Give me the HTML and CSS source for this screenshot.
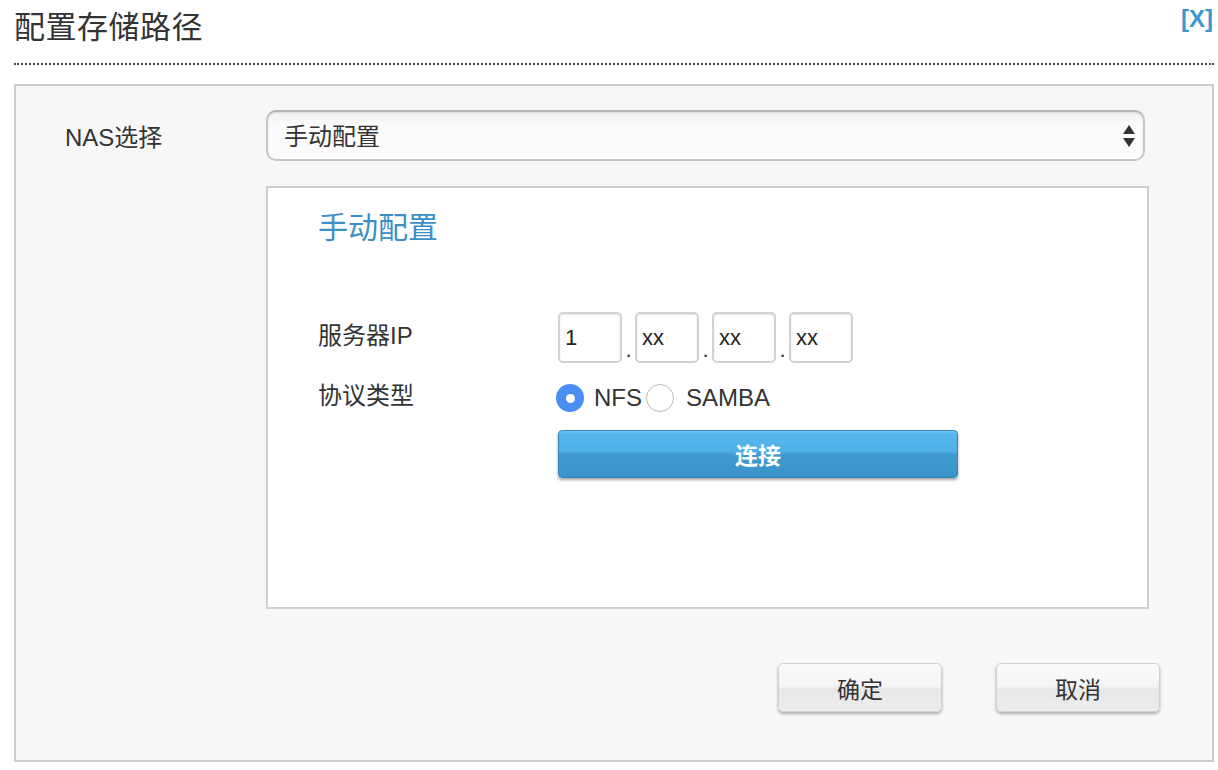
FILE: index.html
```html
<!DOCTYPE html>
<html lang="zh-CN">
<head>
<meta charset="utf-8">
<title>配置存储路径</title>
<link rel="stylesheet" href="styles.css">
</head>
<body>
<div class="dialog">
  <div class="header">
    <h1 class="title">配置存储路径</h1>
    <a class="close" href="#">[X]</a>
  </div>
  <div class="panel">
    <div class="nas-label">NAS选择</div>
    <div class="select">
      <span class="select-text">手动配置</span>
      <svg class="select-arrows" width="12" height="22" viewBox="0 0 12 22"><path d="M6 0 L12 9 L0 9 Z" fill="#333"/><path d="M0 13 L12 13 L6 22 Z" fill="#333"/></svg>
    </div>
    <div class="spacer"></div>
    <div class="manual">
      <div class="manual-title">手动配置</div>
      <div class="form">
        <div class="form-label">服务器IP</div>
        <div class="ip">
          <input class="ip-input" type="text" value="1">
          <span class="ip-sep">.</span>
          <input class="ip-input" type="text" value="xx">
          <span class="ip-sep">.</span>
          <input class="ip-input" type="text" value="xx">
          <span class="ip-sep">.</span>
          <input class="ip-input" type="text" value="xx">
        </div>
        <div class="form-label proto-label">协议类型</div>
        <div class="proto">
          <span class="radio checked"></span>
          <span class="radio-text">NFS</span>
          <span class="radio"></span>
          <span class="radio-text samba">SAMBA</span>
        </div>
        <div></div>
        <button class="connect" type="button">连接</button>
      </div>
    </div>
    <div class="spacer"></div>
    <div class="actions">
      <button class="btn" type="button">确定</button>
      <button class="btn" type="button">取消</button>
    </div>
  </div>
</div>
</body>
</html>
```

FILE: styles.css
```css
* { box-sizing: border-box; }
html, body { margin: 0; padding: 0; background: #fff; }
body {
  font-family: "Liberation Sans", "Noto Sans CJK SC", sans-serif;
  color: #333;
  width: 1218px;
  height: 770px;
  overflow: hidden;
}
.dialog { padding: 0 4px 0 14px; }
.header {
  display: flex;
  justify-content: space-between;
  align-items: flex-start;
  height: 65px;
  padding-top: 8px;
  border-bottom: 2px dotted #444;
}
.title {
  margin: 0;
  font-size: 31px;
  font-weight: normal;
  line-height: 40px;
  color: #333;
  letter-spacing: 0.5px;
}
.close {
  font-size: 24px;
  font-weight: bold;
  line-height: 22px;
  color: #3d97cf;
  text-decoration: none;
  margin-right: 1px;
}
.panel {
  margin-top: 19px;
  border: 2px solid #cdcdcd;
  background: #f7f7f7;
  height: 678px;
  padding: 24px 52px 48px 0;
  display: grid;
  grid-template-columns: 250px 1fr;
  align-content: start;
}
.nas-label {
  padding-left: 49px;
  font-size: 24px;
  align-self: center;
}
.select {
  height: 51px;
  margin-right: 15px;
  border: 2px solid #c6c6c6;
  border-top-color: #b4b4b4;
  border-radius: 10px;
  background: linear-gradient(#f3f3f3, #fbfbfb 30%, #fbfbfb);
  box-shadow: inset 0 1px 2px rgba(0,0,0,0.12);
  display: flex;
  align-items: center;
  justify-content: space-between;
  padding: 0 8px 0 16px;
  font-size: 24px;
}
.select-text { margin-top: -3px; }
.select-arrows { display: block; }
.spacer { height: 0; }
.manual {
  margin-top: 25px;
  margin-right: 11px;
  height: 423px;
  border: 2px solid #cfcfcf;
  background: #fff;
  padding: 22px 0 0 50px;
}
.manual-title {
  font-size: 30px;
  line-height: 36px;
  color: #3b8fc5;
}
.form {
  margin-top: 66px;
  display: grid;
  grid-template-columns: 240px auto;
  justify-content: start;
  align-items: center;
}
.form-label { font-size: 24px; line-height: 28px; margin-top: -4px; }
.proto-label { margin-top: 17px; }
.ip { display: flex; align-items: flex-end; }
.ip-input {
  width: 64px;
  height: 51px;
  border: 2px solid #d2d2d2;
  border-radius: 5px;
  box-shadow: inset 0 1px 2px rgba(0,0,0,0.1);
  padding: 0 0 0 5px;
  font-family: "Liberation Sans", sans-serif;
  font-size: 22px;
  color: #222;
  background: #fff;
  outline: none;
}
.ip-sep {
  width: 13px;
  text-align: center;
  font-size: 22px;
  line-height: 1;
  padding-bottom: 2px;
}
.proto {
  display: flex;
  align-items: center;
  margin-top: 21px;
  height: 28px;
  margin-left: -2px;
}
.radio {
  width: 28px;
  height: 28px;
  border-radius: 50%;
  border: 1px solid #b9b9b9;
  background: #fff;
  display: flex;
  align-items: center;
  justify-content: center;
}
.radio.checked {
  border: none;
  background: #4a8ef2;
}
.radio.checked::after {
  content: "";
  width: 9px;
  height: 9px;
  border-radius: 50%;
  background: #fff;
}
.radio-text {
  font-size: 24px;
  margin: 0 4px 0 10px;
}
.radio-text.samba { margin-left: 12px; }
.connect {
  margin-top: 18px;
  width: 400px;
  height: 48px;
  border: 1px solid #3487b8;
  border-radius: 4px;
  background: linear-gradient(#6ec8f3 0%, #55b6ec 8%, #4fb0e8 45%, #3f9ad0 50%, #3a94ca 100%);
  box-shadow: 0 2px 3px rgba(0,0,0,0.35);
  color: #fff;
  font-family: "Liberation Sans", "Noto Sans CJK SC", sans-serif;
  font-size: 23px;
  font-weight: bold;
  padding: 0;
}
.actions {
  margin-top: 54px;
  display: flex;
  justify-content: flex-end;
  gap: 54px;
}
.btn {
  width: 164px;
  height: 49px;
  border: 1px solid #d0d0d0;
  border-radius: 5px;
  background: linear-gradient(#fafafa 0%, #f4f4f4 48%, #e8e8e8 52%, #ececec 100%);
  box-shadow: 0 2px 3px rgba(0,0,0,0.3);
  font-family: "Liberation Sans", "Noto Sans CJK SC", sans-serif;
  font-size: 23px;
  color: #333;
  padding: 0;
}
```
